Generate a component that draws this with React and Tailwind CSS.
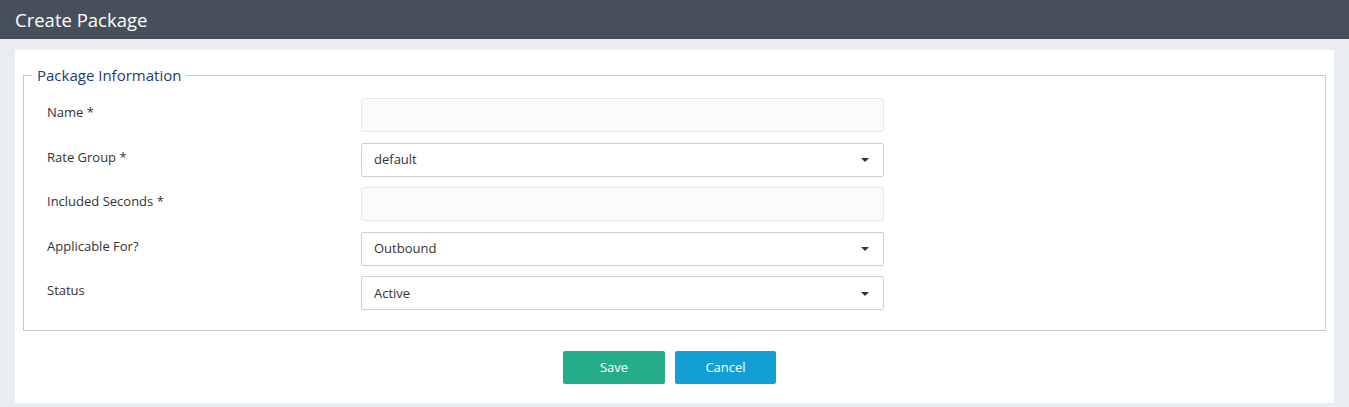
import React from "react";

const font = { fontFamily: '"Open Sans", "Noto Sans", sans-serif' };

function Caret() {
  return (
    <svg width="8" height="4" viewBox="0 0 8 4" className="shrink-0">
      <path d="M0 0 L8 0 L4 4 Z" fill="#333" />
    </svg>
  );
}

function TextInput() {
  return (
    <div className="h-[34px] w-[523px] rounded-[3px] border border-[#e6e6e6] bg-[#fbfbfb]" />
  );
}

function SelectInput({ value }) {
  return (
    <div className="flex h-[34px] w-[523px] items-center justify-between rounded-[2px] border border-[#cfcfcf] bg-white pl-[12px] pr-[14px] pt-[1px] text-[13px] text-[#333]">
      <span>{value}</span>
      <Caret />
    </div>
  );
}

function Row({ label, children }) {
  return (
    <div className="flex items-start">
      <div className="w-[314px] pt-[5px] text-[13px] leading-[18px] text-[#333]">{label}</div>
      {children}
    </div>
  );
}

export default function App() {
  return (
    <div className="min-h-[407px] bg-[#e9ecf1]" style={font}>
      <div className="flex h-[39px] items-center bg-[#474f5b] px-[15px] text-[18.5px] text-white">
        Create Package
      </div>
      <div className="px-[15px] pt-[11px] pb-[4px]">
        <div className="bg-white px-[8px] pt-[15px] pb-[19px]">
          <fieldset className="border border-[#c8c8c8] px-[23px] pt-[13px] pb-[20px]">
            <legend className="ml-[-15px] px-[5px] text-[15px] leading-[20px] text-[#1e3a70]">
              Package Information
            </legend>
            <div className="flex flex-col gap-[10.5px]">
              <Row label="Name *">
                <TextInput />
              </Row>
              <Row label="Rate Group *">
                <SelectInput value="default" />
              </Row>
              <Row label="Included Seconds *">
                <TextInput />
              </Row>
              <Row label="Applicable For?">
                <SelectInput value="Outbound" />
              </Row>
              <Row label="Status">
                <SelectInput value="Active" />
              </Row>
            </div>
          </fieldset>
          <div className="mt-[20px] flex justify-center gap-[10px] pr-[10px]">
            <button className="h-[33px] w-[102px] rounded-[2px] bg-[#25ad89] text-[13px] text-white">
              Save
            </button>
            <button className="h-[33px] w-[101px] rounded-[2px] bg-[#139fd6] text-[13px] text-white">
              Cancel
            </button>
          </div>
        </div>
      </div>
    </div>
  );
}
